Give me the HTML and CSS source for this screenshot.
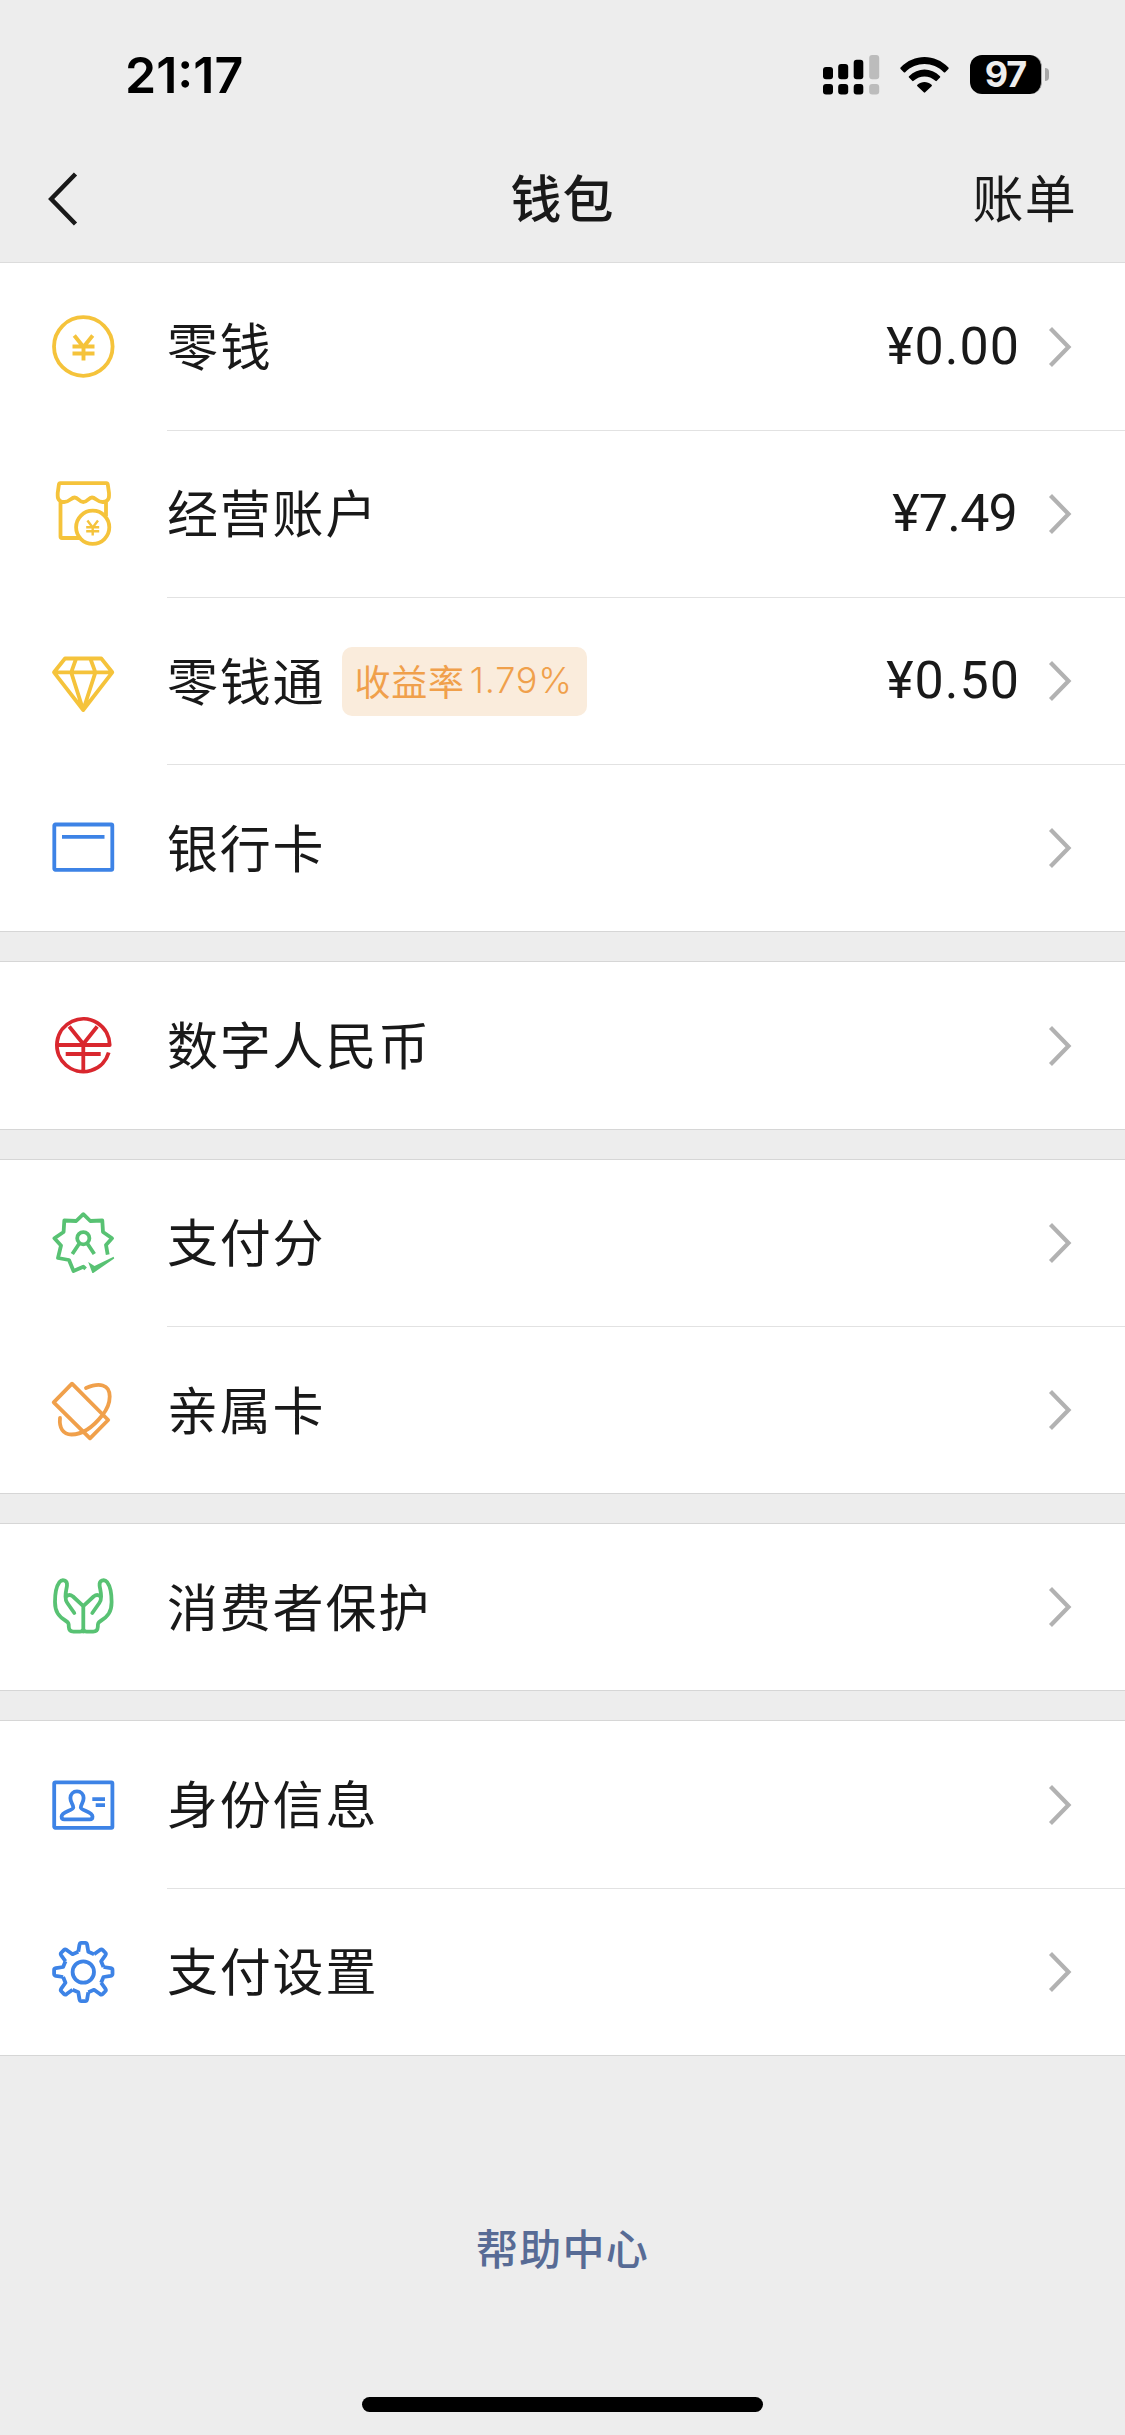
FILE: index.html
```html
<!DOCTYPE html>
<html lang="zh-CN">
<head>
<meta charset="utf-8">
<title>钱包</title>
<link rel="stylesheet" href="styles.css">
</head>
<body>
<svg class="defs" aria-hidden="true">
  <symbol id="chevron" viewBox="0 0 24 42"><path d="M2.5 2.5 L20.5 21 L2.5 39.5" fill="none" stroke="#b2b2b2" stroke-width="4.2"/></symbol>
  <g id="tooth"><path d="M-5 -20.2 L-3.8 -27.4 Q-3.4 -29.2 -2 -29.2 H2 Q3.4 -29.2 3.8 -27.4 L5 -20.2 L10.75 -17.8"/></g>
</svg>
<div class="phone">
  <header class="top">
    <div class="status">
      <span class="time">21:17</span>
      <span class="indicators">
        <svg class="signal" viewBox="0 0 57 40">
          <rect x="0" y="12" width="10" height="12.3" rx="3"/><rect x="15.2" y="9" width="10" height="15.3" rx="3"/><rect x="30.7" y="4.8" width="9.6" height="19.5" rx="3"/><rect class="dim" x="46.2" y="0" width="10" height="24.3" rx="3"/>
          <rect x="0" y="29" width="10" height="10.5" rx="3"/><rect x="15.2" y="29" width="10" height="10.5" rx="3"/><rect x="30.7" y="29" width="9.6" height="10.5" rx="3"/><rect class="dim" x="46.2" y="29" width="10" height="10.5" rx="3"/>
        </svg>
        <svg class="wifi" viewBox="0 0 49 36">
          <path d="M0.6 10.5 C14 -3.5 35 -3.5 48.4 10.5 Q49 11.2 48.4 11.9 L45.2 15.2 Q44.5 15.9 43.8 15.2 C33 4.3 16 4.3 5.2 15.2 Q4.5 15.9 3.8 15.2 L0.6 11.9 Q0 11.2 0.6 10.5Z"/>
          <path d="M9 19.2 C18 10.4 31 10.4 40 19.2 Q40.7 19.9 40 20.6 L36.8 23.8 Q36.1 24.5 35.4 23.8 C29 18 20 18 13.6 23.8 Q12.9 24.5 12.2 23.8 L9 20.6 Q8.3 19.9 9 19.2Z"/>
          <path d="M17.4 27.8 C21.8 24.2 27.2 24.2 31.6 27.8 Q32.4 28.5 31.6 29.3 L25.2 35.3 Q24.5 36 23.8 35.3 L17.4 29.3 Q16.6 28.5 17.4 27.8Z"/>
        </svg>
        <span class="battery"><span class="level">97</span><span class="nub"></span></span>
      </span>
    </div>
    <nav class="nav">
      <svg class="back" viewBox="0 0 30 54"><path d="M27.5 2 L3.2 27 L27.5 52"/></svg>
      <h1>钱包</h1>
      <a class="bill">账单</a>
    </nav>
  </header>

  <section class="group first">
    <div class="row">
      <svg class="icon yellow" viewBox="0 0 64 64"><circle cx="32.3" cy="31.5" r="29.3"/><path class="bold" d="M23.3 20.5 L32.5 32 L41.7 20.5 M21.5 31.5 H43.5 M21.5 38.5 H43.5 M32.5 31 V45.5"/></svg>
      <div class="cell"><span class="label">零钱</span><span class="amount">¥0.00</span><svg class="arrow"><use href="#chevron"/></svg></div>
    </div>
    <div class="row">
      <svg class="icon yellow" viewBox="0 0 64 64"><path d="M9.3 1.2 H55.3 Q56.6 1.2 56.8 2.5 L58 11 V14 C58 18.5 54.5 20 51.5 20 C46.5 20 44.5 15.5 41 15.5 C37.5 15.5 36.5 20 32.3 20 C28.2 20 27.2 15.5 23.7 15.5 C20.2 15.5 18.2 20 13.2 20 C10.2 20 6.7 18.5 6.7 14 V11 L7.9 2.5 Q8.1 1.2 9.3 1.2Z M9.5 19.5 V54.5 Q9.5 56 11 56 H28 M55 19.5 V34"/><circle cx="41.7" cy="45.3" r="16.6"/><path class="fine" d="M36.4 38.5 L41.7 45.5 L47 38.5 M35.2 45.2 H48.2 M35.2 49.2 H48.2 M41.7 45 V53.4"/></svg>
      <div class="cell"><span class="label">经营账户</span><span class="amount tight">¥7.49</span><svg class="arrow"><use href="#chevron"/></svg></div>
    </div>
    <div class="row">
      <svg class="icon yellow" viewBox="0 0 64 64"><path d="M14 8.5 H50.3 L61.3 22.3 L32.2 60 L3 22.3Z M3 22.3 H61.3 M25 9 L20.2 22.3 L32.2 60 L44.4 22.3 L39.5 9"/></svg>
      <div class="cell"><span class="label">零钱通</span><span class="tag">收益率<span class="rate">1.79%</span></span><span class="amount">¥0.50</span><svg class="arrow"><use href="#chevron"/></svg></div>
    </div>
    <div class="row">
      <svg class="icon blue" viewBox="0 0 64 64"><rect x="3.3" y="8.5" width="58" height="45.3" rx="1"/><path d="M11 20.8 H53.5"/></svg>
      <div class="cell"><span class="label">银行卡</span><svg class="arrow"><use href="#chevron"/></svg></div>
    </div>
  </section>

  <section class="group">
    <div class="row">
      <svg class="icon red" viewBox="0 0 64 64"><path d="M6 31 H58.7 A26.4 26.4 0 1 0 57.7 38.5 M14.7 40 H49.7 M32.3 29 V59 M18.2 12.5 L32.3 30 L46.2 12.5"/></svg>
      <div class="cell"><span class="label">数字人民币</span><svg class="arrow"><use href="#chevron"/></svg></div>
    </div>
  </section>

  <section class="group">
    <div class="row">
      <svg class="icon green" viewBox="0 0 64 64"><path d="M56.7 43.7 L55 34 L61 27.3 L52 21 L51.3 9.5 L39.3 10 L32.3 3.2 L25.2 10 L13.3 9.5 L12.6 21 L3.4 27.3 L10 34.5 L7 47 L18 49 L22.5 60 L32.3 55.7 L34.6 57.8"/><circle cx="32.3" cy="27.2" r="6.1"/><path d="M28.3 32.5 L21.3 43 M36.3 32.5 L43.3 43"/><path class="solid" d="M37.2 51 L43.5 55 L62.6 45.8 L63.2 47.6 L42.3 62 H41.3Z"/></svg>
      <div class="cell"><span class="label">支付分</span><svg class="arrow"><use href="#chevron"/></svg></div>
    </div>
    <div class="row">
      <svg class="icon orange" viewBox="0 0 64 64"><path d="M21 5.7 L2.7 24.3 L39 60.3 L57.2 42Z"/><path class="round" d="M35 10 C48 4.5 58.7 6 58.7 18.5 C58.7 26 55.5 32 51.5 37 M9 40 C8 50 12 56.5 20.5 56.5 C31 56.5 42.5 48.5 51.5 37"/></svg>
      <div class="cell"><span class="label">亲属卡</span><svg class="arrow"><use href="#chevron"/></svg></div>
    </div>
  </section>

  <section class="group">
    <div class="row">
      <svg class="icon green" viewBox="0 0 64 64"><path class="round" d="M32.3 30.7 V56.5 M32.3 54 Q31.5 56.6 29 56.6 H22.5 Q18 56.6 17.8 52 C17.8 48.5 17.5 47.5 15 46 C7.5 41.5 4 36.5 4 27 C4 17 5.5 11 8.3 7.3 C11.5 3.5 16.5 5.5 16 10.5 C15.6 14 14.5 17 14.5 21.5 Q14.5 25.5 16.3 28 L23.3 38 M14.8 22 C17 19.5 19.8 19.8 22 21.5 L32.3 31.2 L42.6 21.5 C44.8 19.8 47.6 19.5 49.8 22 M32.3 54 Q33.1 56.6 35.6 56.6 H42.1 Q46.6 56.6 46.8 52 C46.8 48.5 47.1 47.5 49.6 46 C57.1 41.5 60.6 36.5 60.6 27 C60.6 17 59.1 11 56.3 7.3 C53.1 3.5 48.1 5.5 48.6 10.5 C49 14 50.1 17 50.1 21.5 Q50.1 25.5 48.3 28 L41.3 38"/></svg>
      <div class="cell"><span class="label">消费者保护</span><svg class="arrow"><use href="#chevron"/></svg></div>
    </div>
  </section>

  <section class="group">
    <div class="row">
      <svg class="icon blue" viewBox="0 0 64 64"><rect x="3.2" y="9.4" width="58.2" height="45.4" rx="1"/><path d="M26 18.3 C29.8 18.3 32.6 21.2 32.6 25 C32.6 30 29.8 31 29.8 34.6 C29.8 37.5 41.5 38.5 41.5 43.5 Q41.5 46.3 39 46.3 H13.2 Q10.6 46.3 10.6 43.5 C10.6 38.5 22.3 37.5 22.3 34.6 C22.3 31 19.4 30 19.4 25 C19.4 21.2 22.3 18.3 26 18.3Z M41.3 26.2 H54 M44.7 32.2 H54"/></svg>
      <div class="cell"><span class="label">身份信息</span><svg class="arrow"><use href="#chevron"/></svg></div>
    </div>
    <div class="row">
      <svg class="icon blue" viewBox="0 0 64 64"><circle cx="32.3" cy="32" r="10.7"/><g transform="translate(32.3 32)"><use href="#tooth"/><use href="#tooth" transform="rotate(45)"/><use href="#tooth" transform="rotate(90)"/><use href="#tooth" transform="rotate(135)"/><use href="#tooth" transform="rotate(180)"/><use href="#tooth" transform="rotate(225)"/><use href="#tooth" transform="rotate(270)"/><use href="#tooth" transform="rotate(315)"/></g></svg>
      <div class="cell"><span class="label">支付设置</span><svg class="arrow"><use href="#chevron"/></svg></div>
    </div>
  </section>

  <footer class="footer">
    <a class="help">帮助中心</a>
    <div class="home-bar"></div>
  </footer>
</div>
</body>
</html>
```
FILE: styles.css
```css
* { box-sizing: border-box; }
body {
  margin: 0;
  background: #ededed;
  color: #191919;
  font-family: "Noto Sans CJK SC", sans-serif;
}
.defs { display: none; }
.phone {
  width: 1125px;
  height: 2435px;
  display: flex;
  flex-direction: column;
}
.top {
  height: 263.4px;
  flex: none;
  border-bottom: 1px solid #dcdcdc;
}
.status {
  height: 149px;
  padding: 0 76px 0 125px;
  display: flex;
  justify-content: space-between;
  align-items: center;
}
.time {
  color: #000;
  font: 600 50px/60px Inter, sans-serif;
  letter-spacing: 0;
}
.indicators { display: flex; align-items: center; }
.signal { width: 57px; height: 40px; margin-right: 20px; }
.signal .dim { fill: #bcbcbc; }
.wifi { width: 49px; height: 36px; margin-right: 21px; }
.battery { display: flex; align-items: center; gap: 3px; }
.level {
  width: 72px;
  height: 39px;
  border-radius: 12px;
  background: #000;
  border-right: 1px solid #a8a8a8;
  color: #ededed;
  font: 700 36px/39px Inter, sans-serif;
  letter-spacing: -1px;
  text-align: center;
}
.nub { width: 4px; height: 13px; background: #a8a8a8; border-radius: 0 4px 4px 0; }
.nav {
  height: 100px;
  padding: 0 48px;
  display: grid;
  grid-template-columns: 1fr auto 1fr;
  align-items: center;
}
.back { width: 30px; height: 54px; }
.back path { fill: none; stroke: #191919; stroke-width: 4.5; }
h1 { margin: 0; padding-bottom: 6px; font-size: 51px; line-height: 76px; font-weight: 500; letter-spacing: 1px; }
.bill { justify-self: end; padding-bottom: 6px; font-size: 51px; line-height: 76px; letter-spacing: 1.3px; }
.group {
  flex: none;
  margin-bottom: 29px;
  background: #fff;
  border-top: 1px solid #d6d6d6;
}
.group.first { border-top: 0; }
.row {
  height: 167.25px;
  padding-left: 51px;
  display: flex;
  align-items: center;
}
.row:last-child { border-bottom: 1px solid #d6d6d6; }
.icon {
  width: 64px;
  height: 64px;
  flex: none;
  margin-right: 52px;
  overflow: visible;
  fill: none;
  stroke-width: 3.8;
  stroke-linejoin: round;
}
.icon .bold { stroke-width: 3.9; }
.icon .fine { stroke-width: 2.4; }
.icon .round { stroke-linecap: round; }
.yellow { stroke: #f5c33b; }
.blue { stroke: #3d83e6; }
.red { stroke: #d9272e; }
.green { stroke: #58c273; }
.orange { stroke: #f0a04b; }
.icon .solid { fill: #58c273; stroke: none; }
.cell {
  flex: 1;
  align-self: stretch;
  padding-right: 53px;
  display: flex;
  align-items: center;
}
.row:not(:last-child) .cell { border-bottom: 1px solid #e2e2e2; }
.label { padding-bottom: 5px; font-size: 51px; line-height: 76px; letter-spacing: 1.8px; }
.tag {
  display: flex;
  align-items: center;
  width: 245px;
  height: 69px;
  margin-left: 17px;
  padding: 0 0 2px 12px;
  border-radius: 10px;
  background: #faecdc;
  color: #f0a04b;
  font-size: 36px;
  font-weight: 400;
  letter-spacing: 0.8px;
  white-space: nowrap;
}
.rate { margin-left: 5px; font-family: Inter, sans-serif; font-weight: 300; letter-spacing: 0.8px; }
.amount { margin-left: auto; font: 400 52px/60px Roboto, sans-serif; letter-spacing: 1px; }
.amount.tight { letter-spacing: -0.8px; }
.arrow { width: 24px; height: 42px; margin-left: auto; flex: none; }
.amount + .arrow { margin-left: 28px; }
.amount.tight + .arrow { margin-left: 31px; }
.footer {
  flex: 1;
  display: flex;
  flex-direction: column;
  align-items: center;
  justify-content: space-between;
  padding: 132px 0 23px;
}
.help { color: #576b95; font-size: 42px; line-height: 60px; font-weight: 500; letter-spacing: 1.3px; }
.home-bar { width: 401px; height: 15px; border-radius: 8px; background: #000; }
```
